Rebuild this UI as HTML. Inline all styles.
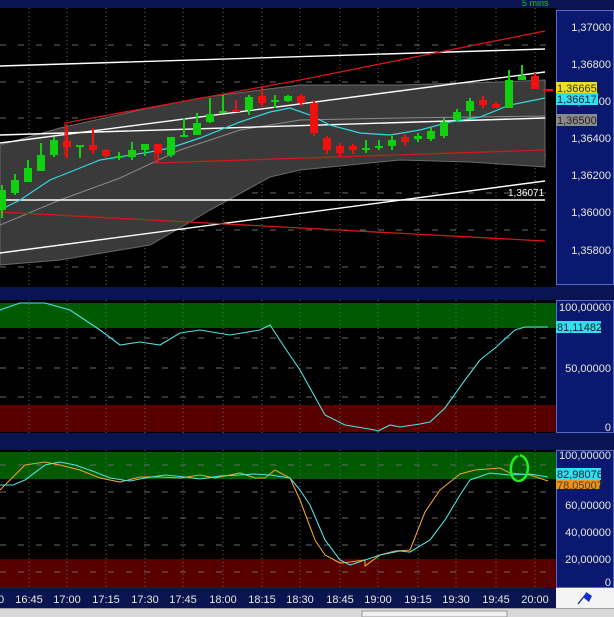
<!DOCTYPE html>
<html><head><meta charset="utf-8"><style>
html,body{margin:0;padding:0;background:#0a1450;width:614px;height:617px;overflow:hidden}
svg{display:block;font-family:"Liberation Sans",sans-serif}
</style></head><body>
<svg id="s" width="614" height="617" xmlns="http://www.w3.org/2000/svg">
<rect width="614" height="617" fill="#0a1450"/>
<!-- top panel -->
<rect x="0" y="8" width="556" height="279" fill="#000"/>
<g id="grid1" stroke="#6a6a6a" stroke-width="1" stroke-dasharray="1,3"></g>
<polygon fill="#3a3a3a" stroke="#6a6a6a" stroke-width="1" points="0,145 60,128 140,110 200,98 260,90 300,85 400,85 500,82 545,80 545,167 470,162 400,160 300,170 270,177 210,210 185,225 150,245 60,260 0,265"/>
<polyline fill="none" stroke="#8a8a8a" stroke-width="1" points="0,225 60,200 120,178 180,150 240,130 300,120 400,118 545,116"/>
<g stroke="#fff" stroke-width="1.4" fill="none">
<line x1="0" y1="66" x2="545" y2="49"/>
<line x1="0" y1="143" x2="545" y2="72"/>
<line x1="0" y1="135" x2="545" y2="118"/>
<line x1="0" y1="200" x2="545" y2="200"/>
<line x1="0" y1="253" x2="545" y2="181"/>
</g>
<g stroke="#d01818" stroke-width="1.3" fill="none">
<polyline points="65,157 65,123 300,80 545,31"/>
<polyline points="155,150 155,163 545,150"/>
<line x1="0" y1="212" x2="545" y2="241"/>
</g>
<polyline fill="none" stroke="#30d8e0" stroke-width="1.2" points="0,210 20,200 50,180 80,168 100,160 150,152 170,148 200,138 240,122 270,112 290,108 310,115 330,125 360,133 390,135 420,130 450,122 480,117 510,105 545,98"/>
<g id="candles"></g>
<text x="508" y="196" fill="#fff" font-size="10">1,36071</text>
<text x="522" y="6" fill="#20c020" font-size="9">5 mins</text>
<!-- top axis -->
<rect x="556.5" y="10.5" width="57" height="274" fill="#0a1870" stroke="#5a6ac8"/>
<g fill="#e8e8d8" font-size="11" text-anchor="end">
<text x="611" y="31">1,37000</text><text x="611" y="68">1,36800</text><text x="611" y="105">1,36600</text>
<text x="611" y="142">1,36400</text><text x="611" y="179">1,36200</text><text x="611" y="216">1,36000</text><text x="611" y="254">1,35800</text>
</g>
<rect x="556" y="82" width="41" height="11" fill="#f0e020"/><text x="557" y="92" font-size="11" fill="#333">1,36665</text>
<rect x="556" y="93" width="42" height="12" fill="#30e0f0"/><text x="557" y="103" font-size="11" fill="#223">1,36617</text>
<rect x="556" y="114" width="41" height="12" fill="#8a8a8a"/><text x="557" y="124" font-size="11" fill="#222">1,36500</text>
<!-- mid panel -->
<rect x="0" y="300" width="556" height="133" fill="#000"/>
<rect x="0" y="303" width="556" height="25" fill="#005a00"/>
<rect x="0" y="405" width="556" height="27" fill="#580000"/>
<g id="grid2" stroke="#6a6a6a" stroke-width="1" stroke-dasharray="1,3"></g>
<polyline fill="none" stroke="#50e0e0" stroke-width="1.1" points="0,310 20,303 45,303 70,310 100,330 120,345 140,342 160,345 180,333 200,330 230,335 260,330 270,325 285,348 300,370 325,415 345,425 375,430 378,431 390,425 400,427 420,424 430,422 445,408 465,380 480,360 495,348 515,330 525,327 548,327"/>
<rect x="556.5" y="300.5" width="57" height="132" fill="#0a1870" stroke="#5a6ac8"/>
<g fill="#e8e8d8" font-size="11" text-anchor="end">
<text x="611" y="311">100,00000</text><text x="611" y="372">50,00000</text><text x="611" y="431">0</text>
</g>
<rect x="556" y="321" width="45" height="12" fill="#30e0f0"/><text x="557" y="331" font-size="11" fill="#223">81,11482</text>
<!-- bottom panel -->
<rect x="0" y="450" width="556" height="138" fill="#000"/>
<rect x="0" y="452" width="556" height="27" fill="#005a00"/>
<rect x="0" y="559" width="556" height="29" fill="#580000"/>
<g id="grid3" stroke="#6a6a6a" stroke-width="1" stroke-dasharray="1,3"></g>
<polyline fill="none" stroke="#f0a030" stroke-width="1.1" points="0,490 10,480 25,465 45,462 60,465 80,470 100,478 120,482 140,477 160,477 180,478 200,475 215,478 240,473 255,478 265,478 275,470 290,478 300,500 315,540 325,555 340,563 350,562 365,560 365,566 380,555 395,551 410,550 425,512 440,490 460,474 475,470 500,468 510,473 530,475 548,481"/>
<polyline fill="none" stroke="#50e0e0" stroke-width="1.1" points="0,485 13,485 25,480 45,465 60,462 75,465 95,472 110,478 130,481 145,478 165,475 185,477 200,479 220,476 240,475 255,474 270,475 290,478 300,490 310,505 325,540 340,560 350,565 365,560 380,555 400,551 410,552 430,540 445,520 460,495 470,480 490,473 510,475 530,474 548,477"/>
<path d="M520,455 C528,458 530,468 526,476 C522,483 514,482 512,476 C509,468 512,458 518,456" fill="none" stroke="#20f020" stroke-width="2.5"/>
<rect x="556.5" y="450.5" width="57" height="137" fill="#0a1870" stroke="#5a6ac8"/>
<g fill="#e8e8d8" font-size="11" text-anchor="end">
<text x="611" y="459">100,00000</text><text x="611" y="509">60,00000</text><text x="611" y="536">40,00000</text><text x="611" y="563">20,00000</text><text x="611" y="586">0</text>
</g>
<rect x="556" y="479" width="44" height="10" fill="#f09020"/><text x="557" y="489" font-size="11" fill="#442">78,05007</text>
<rect x="556" y="468" width="45" height="12" fill="#30e0f0"/><text x="557" y="478" font-size="11" fill="#223">82,98076</text>
<!-- time axis -->
<g id="times" fill="#e8e8d8" font-size="11" text-anchor="middle"></g>
<rect x="556" y="588" width="58" height="20" fill="#f4f4f4"/>
<path d="M578,604 L586,594" stroke="#202080" stroke-width="1.3"/>
<path d="M586,592 L592,596 L589,602 L584,598 Z" fill="#1030d0"/>
<rect x="0" y="608" width="614" height="9" fill="#d8d8d8"/>
<rect x="362" y="611" width="145" height="6" fill="#f0f0f0" stroke="#999"/>
<rect x="0" y="608" width="614" height="1" fill="#a0a0a0"/>
</svg>
<script>
var NS="http://www.w3.org/2000/svg";
function el(p,t,a){var e=document.createElementNS(NS,t);for(var k in a)e.setAttribute(k,a[k]);p.appendChild(e);return e;}
var tx=[29,67,106,145,183,223,262,300,340,378,418,456,496,535];
var g1=document.getElementById('grid1'),g2=document.getElementById('grid2'),g3=document.getElementById('grid3');
tx.forEach(function(x){el(g1,'line',{x1:x,y1:8,x2:x,y2:287});el(g2,'line',{x1:x,y1:300,x2:x,y2:433});el(g3,'line',{x1:x,y1:450,x2:x,y2:588});});
[45,82,118,155,193,230,267].forEach(function(y){el(g1,'line',{x1:0,y1:y,x2:556,y2:y,'stroke-dasharray':'6,12'});});
[338,368,397].forEach(function(y){el(g2,'line',{x1:0,y1:y,x2:556,y2:y,'stroke-dasharray':'6,12'});});
[465,492,518,545,572].forEach(function(y){el(g3,'line',{x1:0,y1:y,x2:556,y2:y,'stroke-dasharray':'6,12'});});
var labels=["16:45","17:00","17:15","17:30","17:45","18:00","18:15","18:30","18:45","19:00","19:15","19:30","19:45","20:00"];
var tg=document.getElementById('times');
labels.forEach(function(l,i){el(tg,'text',{x:tx[i],y:603}).textContent=l;});
el(tg,'text',{x:1,y:603}).textContent="0";
var C=[
['G',210,190,185,218],['G',193,180,174,195],['G',182,168,160,182],['G',171,155,143,171],['G',155,140,137,157],
['R',141,147,125,158],['G',146,145,145,158],['R',145,150,128,154],['R',150,156,149,158],['G',157,156,152,160],
['G',157,150,142,160],['G',150,144,144,156],['R',144,153,144,163],['G',155,137,137,157],['G',136,135,118,137],
['G',135,123,113,135],['G',122,114,98,123],['G',113,111,95,113],['R',110,112,100,112],['G',110,97,95,115],
['R',96,103,87,107],['G',102,100,95,108],['G',101,96,95,102],['R',96,103,94,106],['R',103,133,100,136],
['R',138,150,136,154],['R',146,153,143,157],['R',146,150,144,154],['G',150,148,140,153],['G',147,146,140,150],
['G',146,140,136,150],['R',137,142,134,146],['G',139,136,133,142],['G',139,131,128,141],['G',136,122,118,138],
['G',120,112,109,122],['G',111,101,98,118],['R',100,105,96,108],['R',104,108,102,108],['G',108,80,70,108],
['G',80,76,65,80],['R',76,89,73,89],['R',89,90,89,90]];
var cg=document.getElementById('candles');
C.forEach(function(c,i){var x=2+13*i;var col=c[0]=='G'?'#10d010':'#f01010';
el(cg,'line',{x1:x,y1:c[3],x2:x,y2:c[4],stroke:col,'stroke-width':2});
var t=Math.min(c[1],c[2]),h=Math.max(2,Math.abs(c[1]-c[2]));
var w=(i==42)?10:8;
el(cg,'rect',{x:x-w/2,y:t,width:w,height:h,fill:col});});
</script>
</body></html>
